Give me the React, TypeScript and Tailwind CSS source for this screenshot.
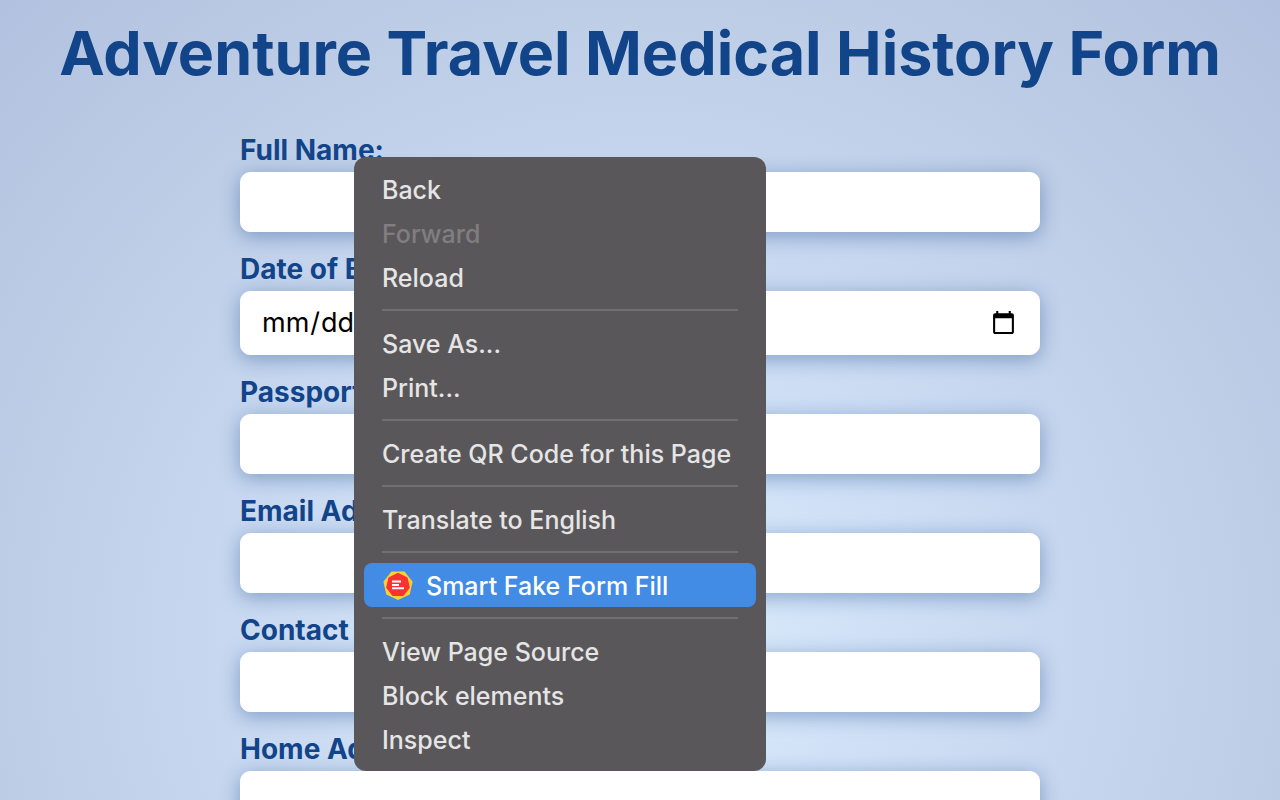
import { Fragment } from "react";

type MenuEntry = { label: string; disabled?: boolean; active?: boolean };

const fields = [
  { id: "full-name", label: "Full Name:", type: "text" },
  { id: "birth-date", label: "Date of Birth:", type: "date" },
  { id: "passport", label: "Passport Number:", type: "text" },
  { id: "email", label: "Email Address:", type: "email" },
  { id: "phone", label: "Contact Number:", type: "tel" },
];

const menuGroups: MenuEntry[][] = [
  [{ label: "Back" }, { label: "Forward", disabled: true }, { label: "Reload" }],
  [{ label: "Save As..." }, { label: "Print..." }],
  [{ label: "Create QR Code for this Page" }],
  [{ label: "Translate to English" }],
  [{ label: "Smart Fake Form Fill", active: true }],
  [{ label: "View Page Source" }, { label: "Block elements" }, { label: "Inspect" }],
];

const labelClass = "block text-[28px] leading-[34px] font-bold text-[#12448a]";
const inputClass =
  "mt-[5px] block w-full rounded-[10px] border border-white bg-white px-5 text-[27px] text-black shadow-[0_4px_20px_rgba(18,68,138,0.4)] outline-none";

function FormFillIcon() {
  return (
    <svg viewBox="-16 -16 32 32" className="size-8" aria-hidden="true">
      <path d="M0 15-11.7 9.4-14.6-3.3-6.5-13.5H6.5L14.6-3.3 11.7 9.4z" fill="#fdd035" />
      <path d="M0-12.2 9.5-7.6 11.9 2.7 5.3 11H-5.3L-11.9 2.7-9.5-7.6z" fill="#fb3230" />
      <path d="M-6-4.5h9v2h-9zM-6-1h7v2h-7zM-6 2.2H6v2H-6z" fill="#fff" />
    </svg>
  );
}

function ContextMenu() {
  return (
    <div
      role="menu"
      className="absolute top-6 left-[114px] w-[412px] rounded-xl bg-[#5a575a] p-2.5"
    >
      {menuGroups.map((group, i) => (
        <Fragment key={group[0].label}>
          {i > 0 && <hr className="mx-[18px] my-2.5 border-t-2 border-[#727073]" />}
          {group.map((item) => (
            <button
              key={item.label}
              type="button"
              role="menuitem"
              disabled={item.disabled}
              className={
                item.active
                  ? "flex h-11 w-full items-center gap-3 rounded-lg bg-[#428ce6] px-[18px] text-[25px] font-medium whitespace-nowrap text-white"
                  : "flex h-11 w-full items-center px-[18px] text-[25px] font-medium whitespace-nowrap text-[#e5e5e5] disabled:text-[#807e81]"
              }
            >
              {item.active && <FormFillIcon />}
              <span className="pt-[3px]">{item.label}</span>
            </button>
          ))}
        </Fragment>
      ))}
    </div>
  );
}

export default function App() {
  return (
    <main className="min-h-screen bg-[radial-gradient(circle_at_50%_640px,#dcecfa_0%,#d0e1f7_25%,#c8d8f0_45%,#bdcde6_71%,#b2c1df_100%)] pt-3.5 font-['Inter',sans-serif]">
      <h1 className="text-center text-[61px] leading-[78px] font-bold text-[#12448a]">
        Adventure Travel Medical History Form
      </h1>

      <form className="relative mx-auto mt-[41px] w-full max-w-[800px]">
        {fields.map((field) => (
          <div key={field.id} className="mb-5">
            <label htmlFor={field.id} className={labelClass}>
              {field.label}
            </label>
            <input
              id={field.id}
              type={field.type}
              className={field.type === "date" ? `${inputClass} h-16` : `${inputClass} h-[60px]`}
            />
          </div>
        ))}
        <div>
          <label htmlFor="address" className={labelClass}>
            Home Address:
          </label>
          <textarea id="address" rows={3} className={`${inputClass} py-4`} />
        </div>

        <ContextMenu />
      </form>
    </main>
  );
}
